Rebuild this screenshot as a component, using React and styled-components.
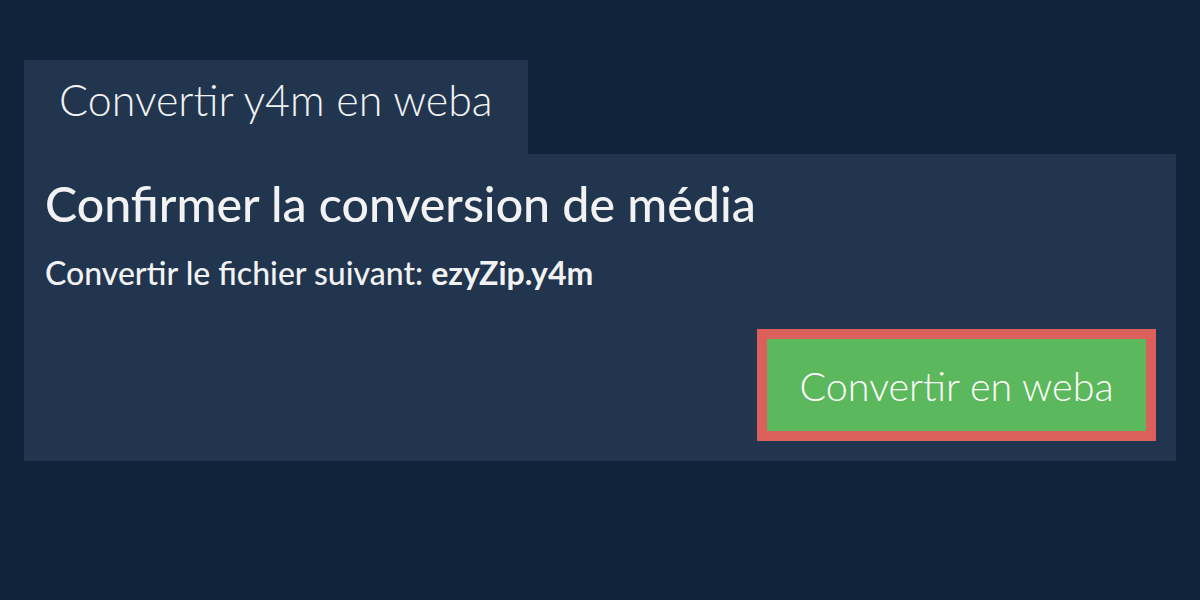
import React from "react";
import styled, { createGlobalStyle } from "styled-components";

const Global = createGlobalStyle`
  html, body { margin: 0; padding: 0; background: #10233a; }
  body { font-family: Lato, "Noto Sans", sans-serif; color: #f2f2f2; }
`;

const Page = styled.div`
  padding: 60px 24px 0 24px;
`;

const Tab = styled.div`
  display: inline-block;
  background: #21354f;
  height: 94px;
  box-sizing: border-box;
  padding: 12px 35px 0 35px;
  font-size: 43px;
  font-weight: 300;
  line-height: 56px;
  color: #f2f2f2;
`;

const Panel = styled.div`
  background: #21354f;
  padding: 21px 20px 20px 21px;
  display: flex;
  flex-direction: column;
`;

const Heading = styled.h1`
  margin: 0;
  font-size: 48.3px;
  font-weight: 500;
  line-height: 56px;
  color: #f2f2f2;
`;

const Line = styled.p`
  margin: 22px 0 0 0;
  font-size: 32px;
  font-weight: 500;
  line-height: 40px;
  color: #f2f2f2;
`;

const FileName = styled.strong`
  font-weight: 700;
`;

const Actions = styled.div`
  display: flex;
  justify-content: flex-end;
  margin-top: 36px;
`;

const Button = styled.button`
  font-family: inherit;
  background: #5cb85c;
  border: 10px solid #db5f5b;
  color: #ffffff;
  font-size: 39.5px;
  font-weight: 300;
  height: 112px;
  width: 399px;
  padding: 0;
  cursor: pointer;
`;

export default function App() {
  return (
    <>
      <Global />
      <Page>
        <Tab>Convertir y4m en weba</Tab>
        <Panel>
          <Heading>Confirmer la conversion de média</Heading>
          <Line>
            Convertir le fichier suivant: <FileName>ezyZip.y4m</FileName>
          </Line>
          <Actions>
            <Button>Convertir en weba</Button>
          </Actions>
        </Panel>
      </Page>
    </>
  );
}
